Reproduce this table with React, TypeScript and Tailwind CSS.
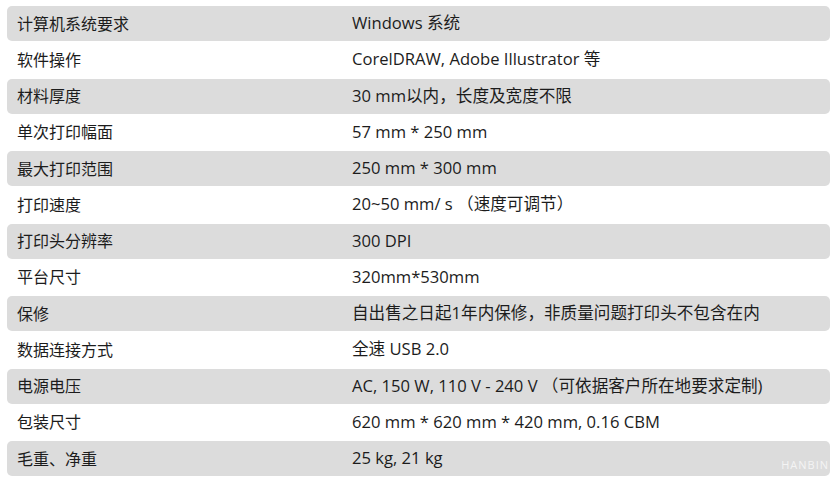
const specs: [string, string][] = [
  ['计算机系统要求', 'Windows 系统'],
  ['软件操作', 'CorelDRAW, Adobe Illustrator 等'],
  ['材料厚度', '30 mm以内，长度及宽度不限'],
  ['单次打印幅面', '57 mm * 250 mm'],
  ['最大打印范围', '250 mm * 300 mm'],
  ['打印速度', '20~50 mm/ s （速度可调节）'],
  ['打印头分辨率', '300 DPI'],
  ['平台尺寸', '320mm*530mm'],
  ['保修', '自出售之日起1年内保修，非质量问题打印头不包含在内'],
  ['数据连接方式', '全速 USB 2.0'],
  ['电源电压', 'AC, 150 W, 110 V - 240 V （可依据客户所在地要求定制)'],
  ['包装尺寸', '620 mm * 620 mm * 420 mm, 0.16 CBM'],
  ['毛重、净重', '25 kg, 21 kg'],
]

export default function App() {
  return (
    <div
      className="relative h-[481px] w-[835px] bg-white pl-[7px] pr-[5px] pt-[6px] text-[16px] text-[#1c1c1c]"
      style={{ fontFamily: '"Open Sans", "Noto Sans CJK SC", sans-serif' }}
    >
      {specs.map(([label, value], i) => (
        <div
          key={label}
          className={
            i % 2 === 0
              ? 'flex h-[35px] items-center rounded-[5px] bg-[#dcdcdc] pl-[10px]'
              : 'flex h-[37.5px] items-center pl-[10px]'
          }
        >
          <span className="w-[335px] shrink-0">{label}</span>
          <span className="text-[16.6px]">{value}</span>
        </div>
      ))}
      <span className="absolute bottom-[8px] right-[6px] text-[11px] tracking-[1px] text-[#f4f4f4]">
        HANBIN
      </span>
    </div>
  )
}
